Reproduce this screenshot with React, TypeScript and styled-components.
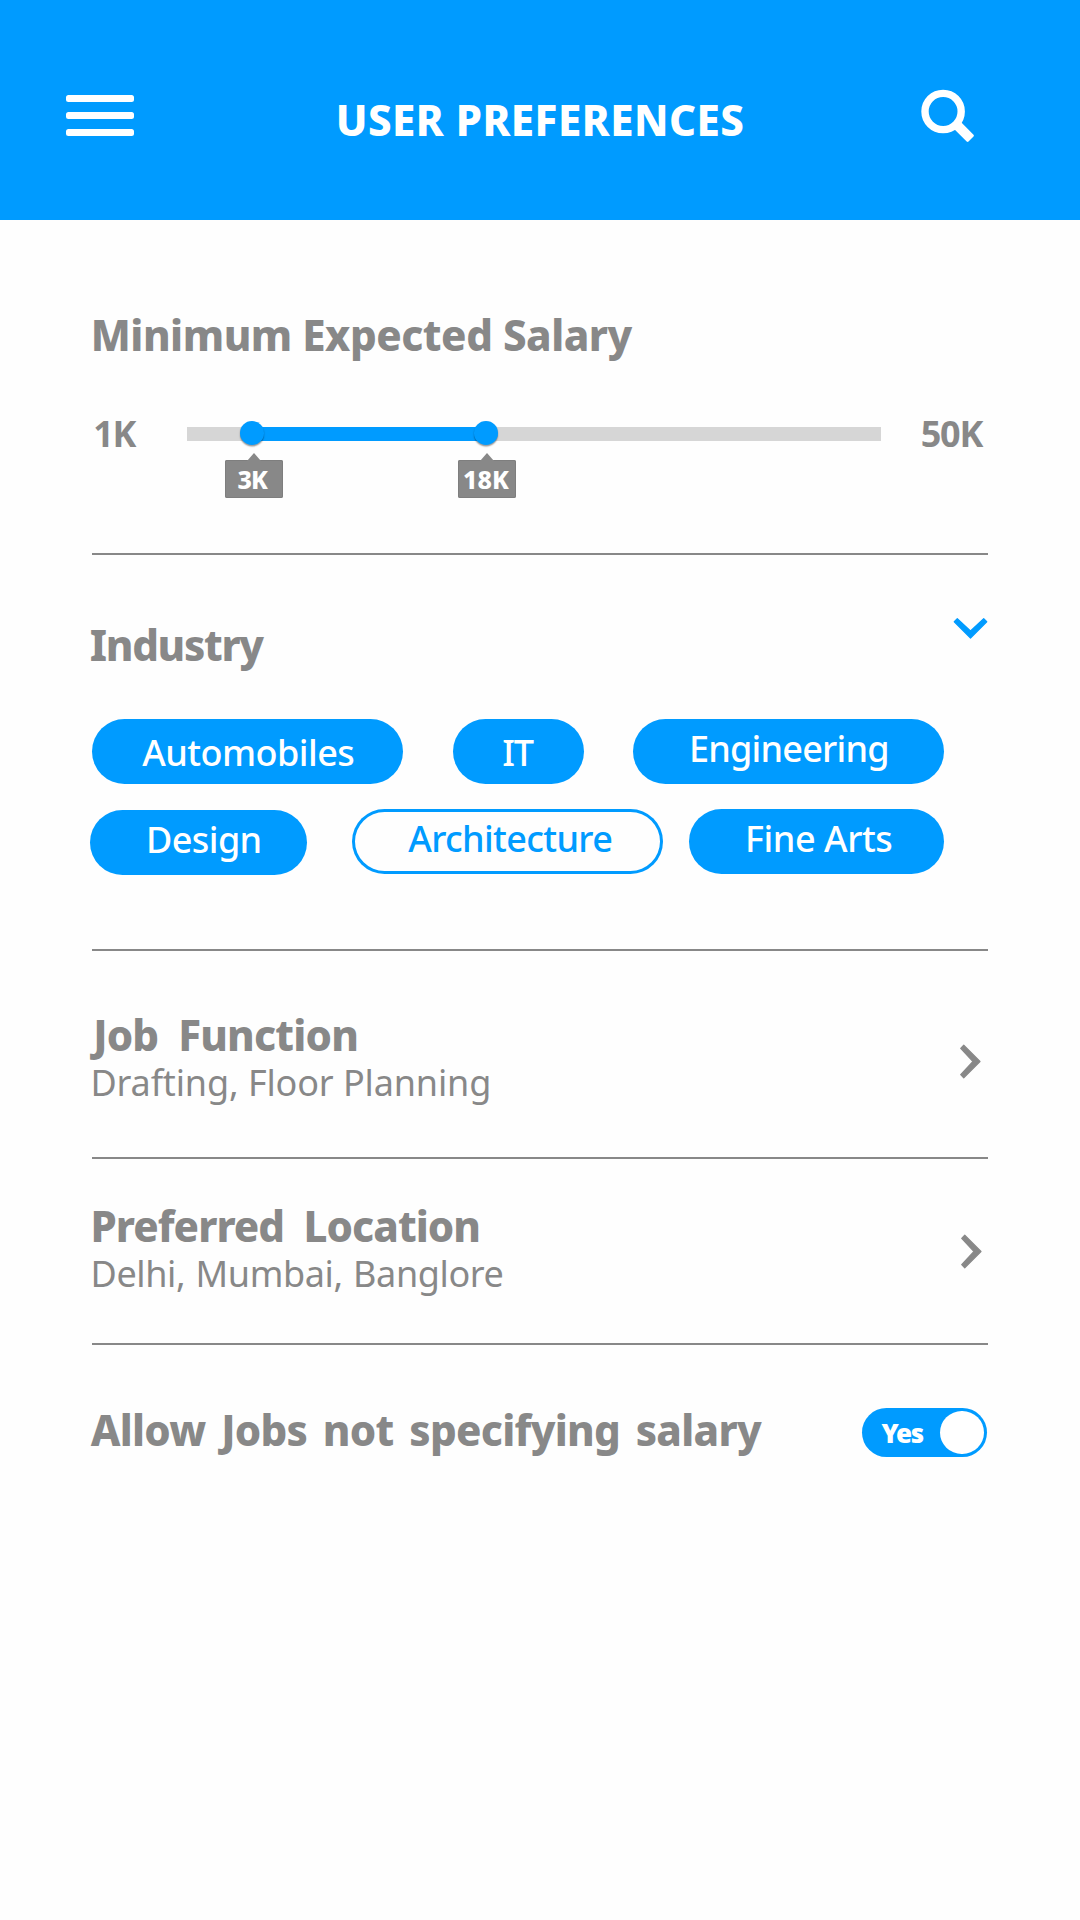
import React from 'react';
import styled, { createGlobalStyle } from 'styled-components';

const BLUE = '#009bff';
const GREY = '#888888';

const GlobalStyle = createGlobalStyle`
  *, *::before, *::after { box-sizing: border-box; }
  body { margin: 0; background: #fefefe; }
`;

const Screen = styled.div`
  width: 1080px;
  height: 1920px;
  overflow: hidden;
  font-family: 'Noto Sans', 'Open Sans', sans-serif;
  color: ${GREY};
  white-space: nowrap;
  button { font: inherit; border: 0; background: none; padding: 0; }
`;

const Header = styled.header`
  display: flex;
  align-items: flex-start;
  height: 220px;
  padding-left: 66px;
  background: ${BLUE};
  color: #fff;
`;

const MenuButton = styled.button`
  display: flex;
  flex-direction: column;
  gap: 10px;
  width: 68px;
  margin-top: 95px;
`;

const MenuBar = styled.span`
  height: 7px;
  width: 68px;
  border-radius: 2.5px;
  background: #fff;
`;

const Title = styled.h1`
  width: 585px;
  margin: 95px 0 0 201.7px;
  font-size: 42px;
  line-height: 50px;
  font-weight: 800;
  letter-spacing: 0.48px;
`;

const SearchButton = styled.button`
  display: flex;
  width: 54px;
  height: 54px;
  margin-top: 89px;
`;

const Main = styled.main`
  padding: 0 92px;
`;

const Section = styled.section<{ $height: number; $top: number; $ruled?: boolean }>`
  height: ${(p) => p.$height}px;
  padding-top: ${(p) => p.$top}px;
  border-bottom: ${(p) => (p.$ruled ? `2px solid ${GREY}` : '0')};
`;

const Row = styled.div`
  display: flex;
  align-items: flex-start;
  justify-content: space-between;
`;

const Heading = styled.h2<{ $x: number; $spacing: number; $words?: number; $y?: number }>`
  margin: ${(p) => p.$y ?? 0}px 0 0 ${(p) => p.$x}px;
  font-size: 42px;
  line-height: 50px;
  font-weight: 800;
  letter-spacing: ${(p) => p.$spacing}px;
  word-spacing: ${(p) => p.$words ?? 0}px;
`;

const Detail = styled.p<{ $spacing: number; $words: number }>`
  margin: 3px 0 0 -1.5px;
  font-size: 36px;
  line-height: 40px;
  letter-spacing: ${(p) => p.$spacing}px;
  word-spacing: ${(p) => p.$words}px;
`;

const SliderRow = styled.div`
  display: flex;
  align-items: flex-start;
  margin-top: 54px;
`;

const Bound = styled.span<{ $x: number; $width: number }>`
  width: ${(p) => p.$width}px;
  padding-left: ${(p) => p.$x}px;
  font-size: 36px;
  line-height: 40px;
  font-weight: 700;
  letter-spacing: -1.3px;
`;

const Track = styled.div`
  position: relative;
  width: 694px;
  height: 14px;
  margin-top: 13px;
  background: #d6d6d6;
`;

const Range = styled.div<{ $from: number; $to: number }>`
  height: 14px;
  margin-left: ${(p) => p.$from}px;
  width: ${(p) => p.$to - p.$from}px;
  background: ${BLUE};
`;

const Knob = styled.div<{ $at: number }>`
  position: absolute;
  left: ${(p) => p.$at - 12.25}px;
  top: -6px;
  width: 24.5px;
  height: 24px;
  border-radius: 50%;
  background: ${BLUE};
  box-shadow: 0 1.5px 1.5px rgba(0, 0, 0, 0.4);
`;

const Tooltip = styled.div<{ $at: number; $textX: number; $spacing: number }>`
  position: absolute;
  left: ${(p) => p.$at}px;
  top: 33px;
  width: 58px;
  height: 38px;
  padding-left: ${(p) => p.$textX}px;
  border-radius: 2px;
  background: ${GREY};
  box-shadow: inset 0 0 0 1px #7e7e7e;
  color: #fff;
  font-size: 25px;
  line-height: 39px;
  font-weight: 800;
  letter-spacing: ${(p) => p.$spacing}px;
  &::before {
    content: '';
    position: absolute;
    left: 22px;
    top: -7px;
    border: solid transparent;
    border-width: 0 7px 8px;
    border-bottom-color: ${GREY};
  }
`;

const PillRow = styled.div<{ $top: number }>`
  display: flex;
  align-items: flex-start;
  height: 65px;
  margin-top: ${(p) => p.$top}px;
`;

interface PillProps {
  $width: number;
  $left: number;
  $textX: number;
  $textY: number;
  $spacing: number;
  $drop?: number;
  $outlined?: boolean;
}

const Pill = styled.button<PillProps>`
  && {
    flex: none;
    width: ${(p) => p.$width}px;
    height: 65px;
    margin: ${(p) => p.$drop ?? 0}px 0 0 ${(p) => p.$left}px;
    padding: ${(p) => p.$textY}px 0 0 ${(p) => p.$textX}px;
    display: flex;
    align-items: flex-start;
    border-radius: 33px;
    background: ${(p) => (p.$outlined ? 'transparent' : BLUE)};
    box-shadow: ${(p) => (p.$outlined ? `inset 0 0 0 3px ${BLUE}` : 'none')};
    color: ${(p) => (p.$outlined ? BLUE : '#fff')};
    font-size: 36px;
    font-weight: 500;
    line-height: 40px;
    letter-spacing: ${(p) => p.$spacing}px;
  }
`;

const Chevron = styled.svg<{ $top: number; $right: number }>`
  display: block;
  flex: none;
  overflow: visible;
  margin: ${(p) => p.$top}px ${(p) => p.$right}px 0 0;
`;

const Toggle = styled.button`
  && {
    display: flex;
    align-items: flex-start;
    justify-content: space-between;
    width: 125px;
    height: 49px;
    margin: 3px 1px 0 0;
    padding: 3px 3.5px 0 19.5px;
    border-radius: 25px;
    background: ${BLUE};
    color: #fff;
    font-size: 26px;
    line-height: 45px;
    font-weight: 900;
    letter-spacing: -1.4px;
  }
`;

const ToggleKnob = styled.span`
  width: 43.5px;
  height: 43px;
  border-radius: 50%;
  background: #fff;
`;

const NextIcon = ({ top, right }: { top: number; right: number }) => (
  <Chevron $top={top} $right={right} width="21" height="35" viewBox="0 0 21 35">
    <path
      d="M3.75 1.25 20 17.5 3.75 33.75 0.7 30.7 13 17.5 0.7 4.3Z"
      fill={GREY}
      stroke={GREY}
      strokeWidth="1.2"
      strokeLinejoin="round"
    />
  </Chevron>
);

export default function App() {
  return (
    <Screen>
      <GlobalStyle />
      <Header>
        <MenuButton aria-label="Menu">
          <MenuBar />
          <MenuBar />
          <MenuBar />
        </MenuButton>
        <Title>USER PREFERENCES</Title>
        <SearchButton aria-label="Search">
          <svg width="54" height="54" viewBox="0 0 54 54">
            <circle cx="22.1" cy="22.5" r="18.1" fill="none" stroke="#fff" strokeWidth="7.4" />
            <path
              d="M38 33 51.6 46.6 46.6 51.6 33 38Z"
              fill="#fff"
              stroke="#fff"
              strokeWidth="2.6"
              strokeLinejoin="round"
            />
          </svg>
        </SearchButton>
      </Header>

      <Main>
        <Section $height={335} $top={90} $ruled>
          <Heading $x={-1.3} $spacing={-0.47}>Minimum Expected Salary</Heading>
          <SliderRow>
            <Bound $x={1.3} $width={95}>1K</Bound>
            <Track>
              <Range $from={65} $to={299.5} />
              <Knob $at={65} />
              <Knob $at={299} />
              <Tooltip $at={38} $textX={12.4} $spacing={-0.85}>3K</Tooltip>
              <Tooltip $at={271} $textX={4.9} $spacing={0.1}>18K</Tooltip>
            </Track>
            <Bound $x={39.8} $width={107}>50K</Bound>
          </SliderRow>
        </Section>

        <Section $height={396} $top={63} $ruled>
          <Row>
            <Heading $x={-2.3} $y={2} $spacing={-1.3}>Industry</Heading>
            <Chevron $top={0} $right={0} width="35" height="21" viewBox="0 0 35 21">
              <path
                d="M1.25 3.75 17.5 20 33.75 3.75 30.7 0.7 17.5 13 4.3 0.7Z"
                fill={BLUE}
                stroke={BLUE}
                strokeWidth="1.2"
                strokeLinejoin="round"
              />
            </Chevron>
          </Row>
          <PillRow $top={49}>
            <Pill $width={311} $left={0} $textX={50.3} $textY={14} $spacing={-0.54}>Automobiles</Pill>
            <Pill $width={131} $left={50} $textX={49.3} $textY={14} $spacing={-1.4}>IT</Pill>
            <Pill $width={311} $left={49} $textX={56} $textY={10} $spacing={-0.78}>Engineering</Pill>
          </PillRow>
          <PillRow $top={25}>
            <Pill $width={217} $left={-2} $drop={1} $textX={56} $textY={10} $spacing={-0.58}>Design</Pill>
            <Pill $width={311} $left={45} $textX={56.2} $textY={10} $spacing={-0.64} $outlined>Architecture</Pill>
            <Pill $width={255} $left={26} $textX={56} $textY={10} $spacing={-0.45}>Fine Arts</Pill>
          </PillRow>
        </Section>

        <Section $height={208} $top={59} $ruled>
          <Row>
            <div>
              <Heading $x={1.2} $spacing={-0.8} $words={9.7}>Job Function</Heading>
              <Detail $spacing={-0.16} $words={0.3}>Drafting, Floor Planning</Detail>
            </div>
            <NextIcon top={34} right={7} />
          </Row>
        </Section>

        <Section $height={186} $top={42} $ruled>
          <Row>
            <div>
              <Heading $x={-1.5} $spacing={-0.95} $words={9.5}>Preferred Location</Heading>
              <Detail $spacing={-0.4} $words={1.5}>Delhi, Mumbai, Banglore</Detail>
            </div>
            <NextIcon top={33} right={6} />
          </Row>
        </Section>

        <Section $height={160} $top={60}>
          <Row>
            <Heading $x={-1.3} $spacing={-0.7} $words={5.4}>Allow Jobs not specifying salary</Heading>
            <Toggle role="switch" aria-checked="true">
              Yes
              <ToggleKnob />
            </Toggle>
          </Row>
        </Section>
      </Main>
    </Screen>
  );
}
